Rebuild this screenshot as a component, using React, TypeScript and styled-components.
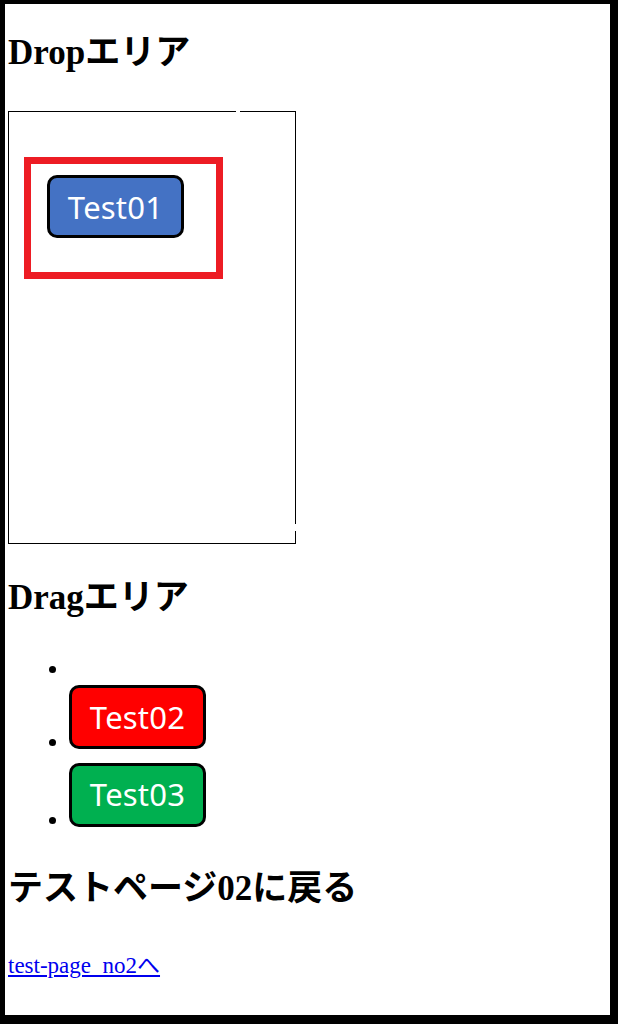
import styled, { createGlobalStyle } from 'styled-components';

const GlobalStyle = createGlobalStyle`
  html, body {
    margin: 0;
    padding: 0;
    background: #000;
  }
  body {
    font-family: "Liberation Serif", "Noto Sans CJK JP", serif;
  }
`

const Frame = styled.div`
  box-sizing: border-box;
  width: 618px;
  height: 1024px;
  border-style: solid;
  border-color: #000;
  border-width: 4px 8px 9px 5px;
  background: #fff;
  padding-left: 3px;
  overflow: hidden;
`

const Heading = styled.h2<{ top: number }>`
  margin: ${p => p.top}px 0 0;
  font-size: 35px;
  line-height: 40px;
  font-weight: bold;
  color: #000;
`

const DropArea = styled.div`
  position: relative;
  box-sizing: border-box;
  width: 288px;
  height: 433px;
  margin-top: 38px;
  border: 1px solid #000;
  padding: 45px 0 0 15px;

  // small white breaks in the captured border
  &::before, &::after {
    content: '';
    position: absolute;
    background: #fff;
  }
  &::before { top: -1px; left: 227px; width: 4px; height: 1px; }
  &::after { right: -1px; top: 412px; width: 1px; height: 7px; }
`

const Selection = styled.div`
  box-sizing: border-box;
  width: 199px;
  height: 122px;
  border: 7px solid #ed1c24;
  padding: 11px 0 0 16px;
`

const Badge = styled.div<{ bg: string }>`
  box-sizing: border-box;
  display: inline-flex;
  align-items: center;
  justify-content: center;
  width: 137px;
  height: 64px;
  border: 3px solid #000;
  border-radius: 10px;
  background: ${p => p.bg};
  color: #fff;
  font-family: "Noto Sans", sans-serif;
  font-size: 31px;
  font-weight: 400;
  letter-spacing: 0.2px;
`

const BadgeSlot = styled.span<{ gap: number }>`
  display: inline-block;
  overflow: hidden;
  vertical-align: baseline;
  margin-top: ${p => p.gap}px;
`

const DragList = styled.ul`
  margin: 38px 0 0;
  padding-left: 61px;
  font-size: 23px;
  line-height: 1.15;
`

const Item = styled.li`
  min-height: 26px;
`

const BackLink = styled.a`
  display: inline-block;
  margin-top: 37px;
  font-size: 23px;
  color: #0000ee;
  text-decoration: underline;
`

export default function App() {
    return <>
        <GlobalStyle/>
        <Frame>
            <Heading top={29}>Dropエリア</Heading>
            <DropArea>
                <Selection>
                    <Badge bg='#4472c4' style={{height: 63}}>Test01</Badge>
                </Selection>
            </DropArea>
            <Heading top={34}>Dragエリア</Heading>
            <DragList>
                <Item/>
                <Item>
                    <BadgeSlot gap={3}><Badge bg='#ff0000'>Test02</Badge></BadgeSlot>
                </Item>
                <Item>
                    <BadgeSlot gap={7}><Badge bg='#00b050'>Test03</Badge></BadgeSlot>
                </Item>
            </DragList>
            <Heading top={36}>テストページ02に戻る</Heading>
            <BackLink href='#'>test-page_no2へ</BackLink>
        </Frame>
    </>
}
